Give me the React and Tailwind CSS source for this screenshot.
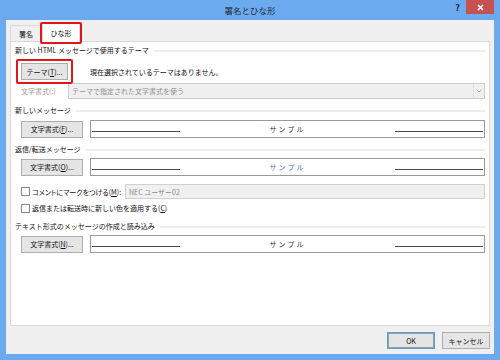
import React from "react";

function U({ children }) {
  return <span className="underline underline-offset-[1px]">{children}</span>;
}

function Btn({ children, className = "" }) {
  return (
    <div
      className={`flex items-center justify-center h-[17px] border border-[#adadad] bg-[#e5e5e5] text-[7px] leading-[12px] text-[#111111] whitespace-nowrap ${className}`}
    >
      {children}
    </div>
  );
}

function Header({ children, className = "" }) {
  return (
    <div className={`flex items-center h-[12px] ${className}`}>
      <span className="text-[#111111] whitespace-nowrap">{children}</span>
      <div className="ml-[5px] mt-[2px] flex-1 h-[2px] bg-[#ececec]" />
    </div>
  );
}

function Sample({ blue }) {
  return (
    <div className="flex-1 h-[18px] border border-[#9a9a9a] bg-white flex items-stretch px-px">
      <div className="w-[88px] flex flex-col justify-end pb-[5px]">
        <div className="h-px bg-[#4a4a4a]" />
      </div>
      <div
        className={`flex-1 flex items-center justify-center tracking-[2px] ${
          blue ? "text-[#4d74ad]" : "text-[#333333]"
        }`}
      >
        サンプル
      </div>
      <div className="w-[88px] flex flex-col justify-end pb-[5px]">
        <div className="h-px bg-[#4a4a4a]" />
      </div>
    </div>
  );
}

function Check() {
  return <div className="w-[9px] h-[9px] border border-[#8a8a8a] bg-white shrink-0" />;
}

export default function App() {
  return (
    <div className="w-[500px] h-[360px] bg-[#6caaf0] flex flex-col font-['Noto_Sans_CJK_JP','Noto_Sans',sans-serif] text-[7px] leading-[12px] text-[#111111] overflow-hidden">
      {/* title bar */}
      <div className="h-[20px] grid grid-cols-[1fr_auto_1fr] items-start">
        <div />
        <div className="text-[8.5px] leading-[20px] text-[#1f2a36]">署名とひな形</div>
        <div className="flex justify-end items-start pr-[6px]">
          <div className="text-[9px] leading-[14px] font-bold text-[#1c2a3a] mr-[6px] mt-[1px]">?</div>
          <div className="w-[28px] h-[14px] bg-[#c75050] flex items-center justify-center">
            <svg width="7" height="7" viewBox="0 0 7 7">
              <path d="M1 1 L6 6 M6 1 L1 6" stroke="#ffffff" strokeWidth="1.6" />
            </svg>
          </div>
        </div>
      </div>

      {/* body */}
      <div className="flex-1 mx-[6px] mb-[6px] bg-[#f0f0f0] flex flex-col px-[4px] pt-[3px]">
        {/* tabs */}
        <div className="h-[19px] flex items-end -mb-px relative z-10">
          <div className="w-[32px] h-[16px] mb-px border border-[#d9d9d9] border-b-0 bg-[#f0f0f0] flex items-center justify-center">
            署名
          </div>
          <div className="relative w-[38px] h-[19px] border border-[#d9d9d9] border-b-0 bg-white flex items-center justify-center">
            ひな形
            <span className="absolute -left-[3px] -top-[2px] -right-[3px] -bottom-[2px] border-[2.5px] border-[#e3151b] rounded-[2px]" />
          </div>
        </div>

        {/* panel */}
        <div className="h-[285px] bg-white border border-[#d9d9d9] flex flex-col px-[4px] pt-[2px]">
          <Header>新しい HTML メッセージで使用するテーマ</Header>

          <div className="mt-[7px] flex items-center pl-[6px]">
            <div className="relative">
              <Btn className="w-[47px]">
                テーマ(<U>T</U>)...
              </Btn>
              <span className="absolute -left-[5px] -top-[4px] -right-[5px] -bottom-[4px] border-[2.5px] border-[#e3151b] rounded-[2px]" />
            </div>
            <div className="ml-[22px] whitespace-nowrap">現在選択されているテーマはありません。</div>
          </div>

          <div className="mt-[3px] h-[16px] flex items-center pl-[6px]">
            <div className="w-[47px] text-[#9a9a9a] whitespace-nowrap">文字書式(:)</div>
            <div className="flex-1 h-[16px] border border-[#cccccc] bg-[#f0f0f0] flex items-center pl-[3px] text-[#8f8f8f]">
              <span className="flex-1 whitespace-nowrap">テーマで指定された文字書式を使う</span>
              <div className="w-[11px] h-[14px] border-l border-[#e0e0e0] flex items-center justify-center">
                <svg width="6" height="4" viewBox="0 0 6 4">
                  <path d="M0.5 0.5 L3 3 L5.5 0.5" stroke="#a8a8a8" strokeWidth="1" fill="none" />
                </svg>
              </div>
            </div>
          </div>

          <Header className="mt-[5px]">新しいメッセージ</Header>
          <div className="mt-[4px] h-[18px] flex items-center pl-[6px]">
            <Btn className="w-[62px] mr-[7px]">
              文字書式(<U>F</U>)...
            </Btn>
            <Sample />
          </div>

          <Header className="mt-[5px]">返信/転送メッセージ</Header>
          <div className="mt-[3px] h-[18px] flex items-center pl-[6px]">
            <Btn className="w-[62px] mr-[7px]">
              文字書式(<U>O</U>)...
            </Btn>
            <Sample blue />
          </div>

          <div className="mt-[8px] h-[15px] flex items-center pl-[6px]">
            <Check />
            <span className="ml-[2px] w-[93px] shrink-0 whitespace-nowrap [font-feature-settings:'palt']">
              コメントにマークをつける(<U>M</U>):
            </span>
            <div className="flex-1 h-[15px] border border-[#d0d0d0] bg-[#f0f0f0] flex items-center pl-[3px] text-[#8a8a8a] whitespace-nowrap">
              NEC ユーザー02
            </div>
          </div>

          <div className="mt-[3px] h-[12px] flex items-center pl-[6px]">
            <Check />
            <span className="ml-[2px] whitespace-nowrap">
              返信または転送時に新しい色を適用する(<U>C</U>)
            </span>
          </div>

          <Header className="mt-[6px]">テキスト形式のメッセージの作成と読み込み</Header>
          <div className="mt-[3px] h-[18px] flex items-center pl-[6px]">
            <Btn className="w-[62px] mr-[7px]">
              文字書式(<U>N</U>)...
            </Btn>
            <Sample />
          </div>
        </div>

        {/* bottom buttons */}
        <div className="mt-[6px] flex justify-end gap-[7px]">
          <div className="w-[48px] h-[17px] border border-[#5aa0e6] bg-[#e5e5e5] flex items-center justify-center shadow-[inset_0_0_0_1px_#9a9a9a]">
            OK
          </div>
          <Btn className="w-[48px]">キャンセル</Btn>
        </div>
      </div>
    </div>
  );
}
